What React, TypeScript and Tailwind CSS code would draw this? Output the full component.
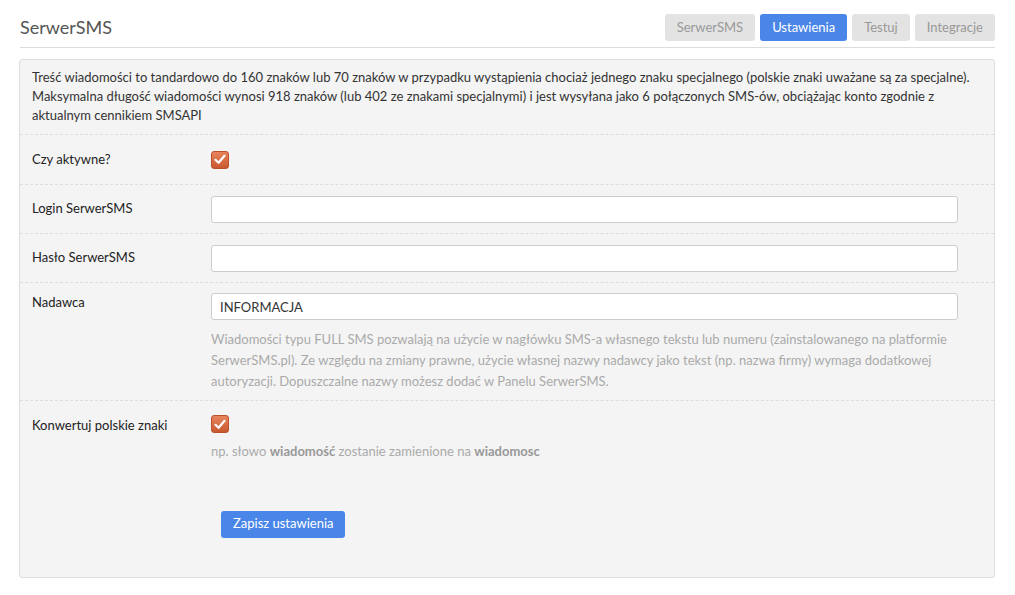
import React from "react";

const tabs = [
  { label: "SerwerSMS", active: false },
  { label: "Ustawienia", active: true },
  { label: "Testuj", active: false },
  { label: "Integracje", active: false },
];

function Check() {
  return (
    <span className="flex h-[18px] w-[18px] items-center justify-center rounded-[3px] border border-[#b8512c] bg-gradient-to-b from-[#e8845c] to-[#c9592f]">
      <svg width="12" height="11" viewBox="0 0 12 11" fill="none">
        <path d="M1.5 5.8 L4.6 8.8 L10.5 1.8" stroke="white" strokeWidth="2.2" strokeLinecap="round" strokeLinejoin="round" />
      </svg>
    </span>
  );
}

function Row({ label, children, className = "" }: { label: string; children: React.ReactNode; className?: string }) {
  return (
    <div className={`flex border-t border-dashed border-[#dddddd] px-3 ${className}`}>
      <div className="w-[179px] shrink-0 text-[13px] text-[#222]">{label}</div>
      <div className="flex-1 pr-[24px]">{children}</div>
    </div>
  );
}

export default function App() {
  return (
    <div className="min-h-screen bg-white px-[20px] text-[13px]" style={{ fontFamily: "Lato, 'Open Sans', sans-serif" }}>
      <div className="flex items-center justify-between border-b border-[#dddddd] pb-[6px] pt-[14px]">
        <h1 className="text-[18px] text-[#555]">SerwerSMS</h1>
        <div className="flex gap-[5px]">
          {tabs.map((t) => (
            <span
              key={t.label}
              className={`flex h-[27px] items-center rounded-[3px] px-3 text-[13px] ${
                t.active ? "bg-[#4a86e8] text-white" : "bg-[#e3e3e3] text-[#999]"
              }`}
            >
              {t.label}
            </span>
          ))}
        </div>
      </div>

      <div className="mt-[11px] ml-[-1px] rounded-[3px] border border-[#dddddd] bg-[#f4f4f4]">
        <p className="px-3 pb-[9px] pt-[8px] leading-[19px] text-[#333]">
          Treść wiadomości to tandardowo do 160 znaków lub 70 znaków w przypadku wystąpienia chociaż jednego znaku specjalnego (polskie znaki uważane są za specjalne).
          Maksymalna długość wiadomości wynosi 918 znaków (lub 402 ze znakami specjalnymi) i jest wysyłana jako 6 połączonych SMS-ów, obciążając konto zgodnie z aktualnym cennikiem SMSAPI
        </p>
        <Row label="Czy aktywne?" className="h-[50px] items-center">
          <Check />
        </Row>
        <Row label="Login SerwerSMS" className="h-[49px] items-center">
          <input className="block h-[27px] w-full rounded-[3px] border border-[#ccc] bg-white px-2" />
        </Row>
        <Row label="Hasło SerwerSMS" className="h-[49px] items-center">
          <input className="block h-[27px] w-full rounded-[3px] border border-[#ccc] bg-white px-2" />
        </Row>
        <Row label="Nadawca" className="pt-[10px] pb-[8px]">
          <div>
            <input defaultValue="INFORMACJA" className="block h-[27px] w-full rounded-[3px] border border-[#ccc] bg-white px-2 text-[13px] text-[#333]" />
            <p className="mt-[9px] leading-[21px] text-[#aaa]">
              Wiadomości typu FULL SMS pozwalają na użycie w nagłówku SMS-a własnego tekstu lub numeru (zainstalowanego na platformie SerwerSMS.pl). Ze względu na zmiany prawne, użycie własnej nazwy nadawcy jako tekst (np. nazwa firmy) wymaga dodatkowej autoryzacji. Dopuszczalne nazwy możesz dodać w Panelu SerwerSMS.
            </p>
          </div>
        </Row>
        <div className="flex border-t border-dashed border-[#dddddd] px-3 pt-[14px]">
          <div className="w-[179px] shrink-0 pt-[1px] text-[#222]">Konwertuj polskie znaki</div>
          <div className="flex-1">
            <Check />
            <p className="mt-[9px] text-[#aaa]">
              np. słowo <b className="text-[#999]">wiadomość</b> zostanie zamienione na <b className="text-[#999]">wiadomosc</b>
            </p>
            <button className="mb-[39px] ml-[10px] mt-[49px] h-[27px] rounded-[3px] bg-[#4a86e8] px-3 text-white">
              Zapisz ustawienia
            </button>
          </div>
        </div>
      </div>
    </div>
  );
}
